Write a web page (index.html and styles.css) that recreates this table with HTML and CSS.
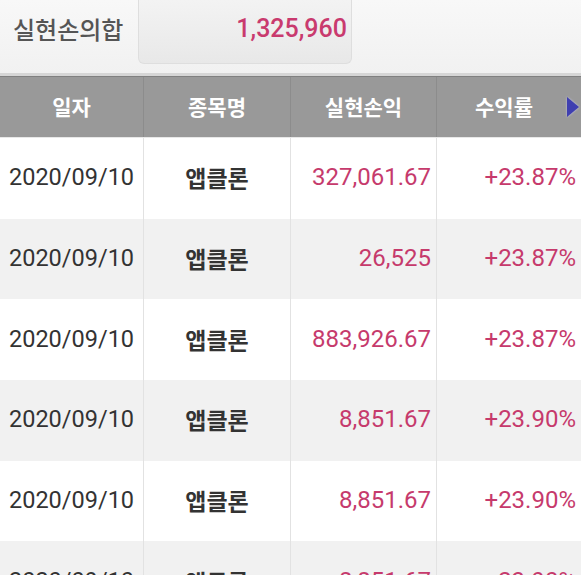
FILE: index.html
```html
<!DOCTYPE html>
<html lang="ko">
<head>
<meta charset="utf-8">
<link rel="stylesheet" href="styles.css">
</head>
<body>
<div class="summary">
  <div class="summary-label">실현손의합</div>
  <div class="summary-box"><span class="summary-value">1,325,960</span></div>
</div>
<div class="table">
  <div class="head">
    <div class="hcell">일자</div>
    <div class="hcell">종목명</div>
    <div class="hcell">실현손익</div>
    <div class="hcell last">수익률<span class="arrow"></span></div>
  </div>
  <div class="row">
    <div class="cell date">2020/09/10</div>
    <div class="cell name">앱클론</div>
    <div class="cell num">327,061.67</div>
    <div class="cell num">+23.87%</div>
  </div>
  <div class="row alt">
    <div class="cell date">2020/09/10</div>
    <div class="cell name">앱클론</div>
    <div class="cell num">26,525</div>
    <div class="cell num">+23.87%</div>
  </div>
  <div class="row">
    <div class="cell date">2020/09/10</div>
    <div class="cell name">앱클론</div>
    <div class="cell num">883,926.67</div>
    <div class="cell num">+23.87%</div>
  </div>
  <div class="row alt">
    <div class="cell date">2020/09/10</div>
    <div class="cell name">앱클론</div>
    <div class="cell num">8,851.67</div>
    <div class="cell num">+23.90%</div>
  </div>
  <div class="row">
    <div class="cell date">2020/09/10</div>
    <div class="cell name">앱클론</div>
    <div class="cell num">8,851.67</div>
    <div class="cell num">+23.90%</div>
  </div>
  <div class="row alt">
    <div class="cell date">2020/09/10</div>
    <div class="cell name">앱클론</div>
    <div class="cell num">8,851.67</div>
    <div class="cell num">+23.90%</div>
  </div>
</div>
</body>
</html>
```
FILE: styles.css
```css
html, body {
  margin: 0;
  padding: 0;
  background: #ffffff;
  overflow: hidden;
}
body {
  width: 581px;
  height: 575px;
  font-family: Roboto, "Noto Sans CJK KR", sans-serif;
}
.summary {
  height: 73px;
  display: flex;
  align-items: flex-start;
  background: linear-gradient(#f8f8f8, #f1f1f1);
  border-bottom: 3px solid #d6d6d6;
}
.summary-label {
  width: 138px;
  box-sizing: border-box;
  padding-left: 13px;
  height: 56px;
  display: flex;
  align-items: center;
  font-family: "Noto Sans CJK KR", sans-serif;
  font-size: 24px;
  font-weight: 500;
  color: #555555;
}
.summary-box {
  width: 214px;
  height: 64px;
  box-sizing: border-box;
  background: linear-gradient(#f3f3f3, #e8e8e8);
  border: 1px solid #dedede;
  border-top: none;
  border-radius: 0 0 6px 6px;
  display: flex;
  align-items: center;
  justify-content: flex-end;
  padding-right: 4px;
  padding-bottom: 7px;
}
.summary-value {
  font-family: Roboto, sans-serif;
  font-size: 25px;
  font-weight: 500;
  color: #c93a6e;
}
.table {
  display: flex;
  flex-direction: column;
}
.head {
  display: grid;
  grid-template-columns: 144px 147px 146px 144px;
  height: 60px;
  background: #999999;
  border-top: 1px solid #808080;
  border-bottom: 1px solid #e8e8e8;
}
.hcell {
  display: flex;
  align-items: center;
  justify-content: center;
  font-family: "Noto Sans CJK KR", sans-serif;
  font-size: 21px;
  font-weight: 700;
  color: #ffffff;
  border-right: 1px solid #8c8c8c;
  padding-bottom: 2px;
}
.hcell.last {
  border-right: none;
  position: relative;
  padding-right: 10px;
}
.arrow {
  position: absolute;
  right: 2px;
  top: 20px;
  width: 0;
  height: 0;
  border-top: 10px solid transparent;
  border-bottom: 10px solid transparent;
  border-left: 12px solid #3f3fb0;
  filter: drop-shadow(0 0 1px #c8c8e8);
}
.row {
  display: grid;
  grid-template-columns: 144px 147px 146px 144px;
  height: 80.7px;
  background: #ffffff;
}
.row.alt {
  background: #f1f1f1;
}
.cell {
  display: flex;
  align-items: center;
  border-right: 1px solid #e2e2e2;
  font-size: 23.5px;
  padding-bottom: 2px;
}
.cell:last-child {
  border-right: none;
}
.date {
  padding-left: 9px;
  color: #333333;
  font-family: Roboto, sans-serif;
}
.name {
  justify-content: center;
  font-family: "Noto Sans CJK KR", sans-serif;
  font-size: 23px;
  font-weight: 700;
  color: #333333;
}
.num {
  justify-content: flex-end;
  padding-right: 5px;
  color: #c63a6c;
  font-family: Roboto, sans-serif;
  font-size: 24px;
}
```
